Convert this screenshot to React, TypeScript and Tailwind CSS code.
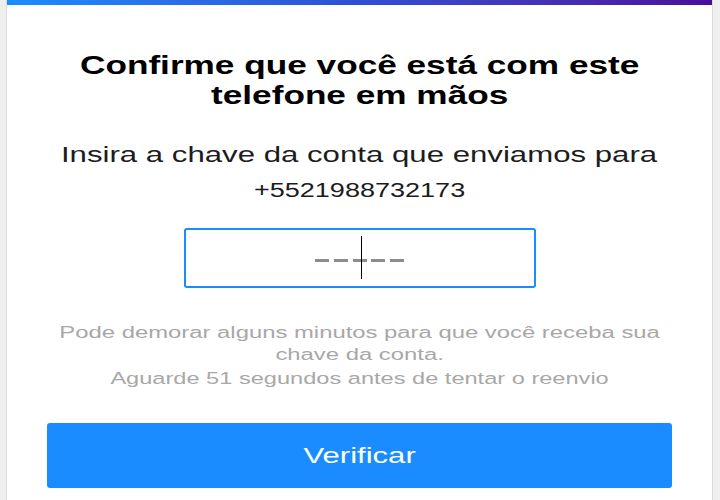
import type { ReactNode } from "react";

// the reference is stretched sideways, so text spans get the same stretch
const Wide = ({ children }: { children: ReactNode }) => (
  <span className="inline-block scale-x-[1.38]">{children}</span>
);

const App = () => {
  return (
    <div className="flex h-[500px] w-full bg-[#efefef] pl-[6px] pr-[7px] font-['Liberation_Sans',Arial,sans-serif]">
      <div className="flex flex-1 flex-col border-x border-[#dcdcdc] bg-white">
        <div className="h-[5px] bg-linear-to-r from-[#1a8cff] via-[#2f4fd2] to-[#4a0c9b]" />

        <div className="flex flex-col items-center px-10 text-center">
          <h1 className="mt-[45px] text-[25.5px] leading-[30px] font-bold text-black">
            <Wide>
              Confirme que você está com este
              <br />
              telefone em mãos
            </Wide>
          </h1>

          <p className="mt-[32px] text-[22.6px] leading-[26px] text-[#1c1c1c]">
            <Wide>Insira a chave da conta que enviamos para</Wide>
          </p>
          <p className="mt-[10px] text-[19.6px] leading-[24px] text-[#1c1c1c]">
            <Wide>+5521988732173</Wide>
          </p>

          <div className="relative mt-[26px] flex h-[60px] w-[352px] items-center justify-center rounded-[3px] border-2 border-[#1a8cff]">
            <div className="flex gap-[4.75px] pt-[4px]">
              <div className="h-[3px] w-[14px] bg-[#8c8c8c]" />
              <div className="h-[3px] w-[14px] bg-[#8c8c8c]" />
              <div className="h-[3px] w-[14px] bg-[#8c8c8c]" />
              <div className="h-[3px] w-[14px] bg-[#8c8c8c]" />
              <div className="h-[3px] w-[14px] bg-[#8c8c8c]" />
            </div>
            <div className="absolute top-[6px] left-[175px] h-[43px] w-px bg-black" />
          </div>

          <p className="mt-[33px] text-[17.3px] leading-[22px] text-[#a8a8a8]">
            <Wide>
              Pode demorar alguns minutos para que você receba sua
              <br />
              chave da conta.
            </Wide>
          </p>
          <p className="mt-[3px] text-[17.1px] leading-[22px] text-[#a8a8a8]">
            <Wide>Aguarde 51 segundos antes de tentar o reenvio</Wide>
          </p>

          <button className="mt-[33px] h-[65px] w-full rounded-[3px] bg-[#1a8cff] text-[22.5px] text-white">
            <Wide>Verificar</Wide>
          </button>
        </div>
      </div>
    </div>
  );
};

export default App;
